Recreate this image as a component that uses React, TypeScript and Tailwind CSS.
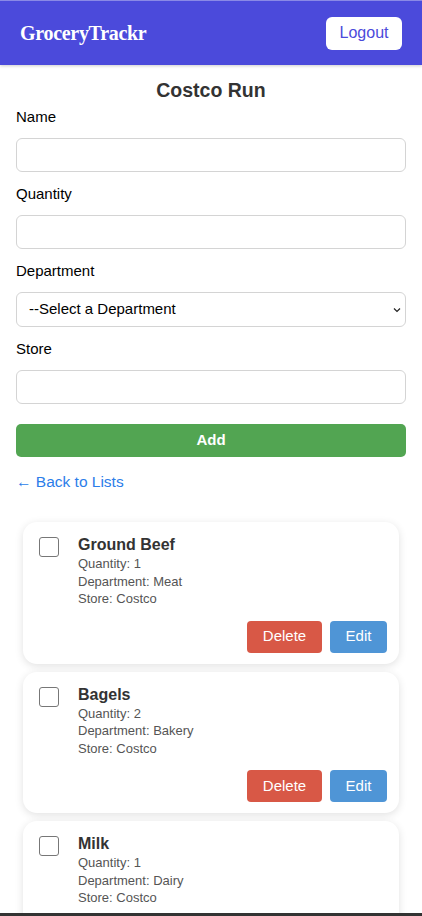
import React from "react";

const items = [
  { name: "Ground Beef", qty: 1, dept: "Meat", store: "Costco" },
  { name: "Bagels", qty: 2, dept: "Bakery", store: "Costco" },
  { name: "Milk", qty: 1, dept: "Dairy", store: "Costco" },
];

function Field({ label, children }: { label: string; children: React.ReactNode }) {
  return (
    <div className="flex flex-col">
      <label className="text-[15px] leading-[18px] text-black mb-[12px]">{label}</label>
      {children}
    </div>
  );
}

export default function App() {
  return (
    <div className="min-h-[916px] bg-white font-['Liberation_Sans',Arial,sans-serif] text-[#333]">
      <header className="h-[65px] bg-[#4b4adb] border-t border-[#8a89e6] flex items-center justify-between pl-[20px] pr-[20px] shadow-[0_1px_3px_rgba(0,0,0,0.2)]">
        <span className="font-['Liberation_Serif',Georgia,serif] font-bold text-[20px] text-white tracking-[-0.3px]">GroceryTrackr</span>
        <button className="w-[76px] h-[33px] bg-white rounded-[6px] text-[#4b4adb] text-[16px]">Logout</button>
      </header>

      <main className="px-[16px]">
        <h1 className="text-center font-bold text-[19.5px] leading-[22px] mt-[14px] mb-[7px] text-[#333]">Costco Run</h1>

        <div className="flex flex-col gap-[13px]">
          <Field label="Name">
            <input className="w-full h-[34px] border border-[#d4d4d4] rounded-[6px] bg-white" />
          </Field>
          <Field label="Quantity">
            <input className="w-full h-[34px] border border-[#d4d4d4] rounded-[6px] bg-white" />
          </Field>
          <Field label="Department">
            <div className="relative h-[35px] border border-[#d4d4d4] rounded-[6px] bg-white flex items-center pl-[12px] text-[15px] text-black">
              --Select a Department
              <svg className="absolute right-[4px] top-[14px]" width="8" height="6" viewBox="0 0 8 6">
                <path d="M1 1.5 L4 4.5 L7 1.5" stroke="#222" strokeWidth="1.2" fill="none" />
              </svg>
            </div>
          </Field>
          <Field label="Store">
            <input className="w-full h-[34px] border border-[#d4d4d4] rounded-[6px] bg-white" />
          </Field>
        </div>

        <button className="mt-[20px] w-full h-[33px] bg-[#52a552] rounded-[5px] text-white text-[15px] font-semibold">Add</button>

        <div className="mt-[15px] text-[#2b7de9] text-[15.5px] leading-[20px]">← Back to Lists</div>

        <div className="mt-[30px] px-[7px] flex flex-col gap-[8px] pb-[10px]">
          {items.map((it) => (
            <div key={it.name} className="rounded-[14px] bg-white shadow-[0_2px_8px_rgba(0,0,0,0.12)] pt-[14px] pb-[11px] pl-[16px] pr-[12px]">
              <div className="flex">
                <div className="w-[20px] h-[20px] border border-[#777] rounded-[3px] mt-[1px] bg-white" />
                <div className="ml-[19px] flex flex-col">
                  <div className="font-bold text-[16px] leading-[18px] text-[#333]">{it.name}</div>
                  <div className="text-[13px] leading-[17.5px] text-[#555] mt-[1px]">Quantity: {it.qty}</div>
                  <div className="text-[13px] leading-[17.5px] text-[#555]">Department: {it.dept}</div>
                  <div className="text-[13px] leading-[17.5px] text-[#555]">Store: {it.store}</div>
                </div>
              </div>
              <div className="flex justify-end gap-[8px] mt-[13px]">
                <button className="w-[75px] h-[32px] bg-[#d85846] rounded-[4px] text-white text-[15px]">Delete</button>
                <button className="w-[57px] h-[32px] bg-[#4f95d6] rounded-[4px] text-white text-[15px]">Edit</button>
              </div>
            </div>
          ))}
        </div>
      </main>
      <div className="fixed bottom-0 left-0 right-0 h-[3px] bg-[#333]" />
    </div>
  );
}
